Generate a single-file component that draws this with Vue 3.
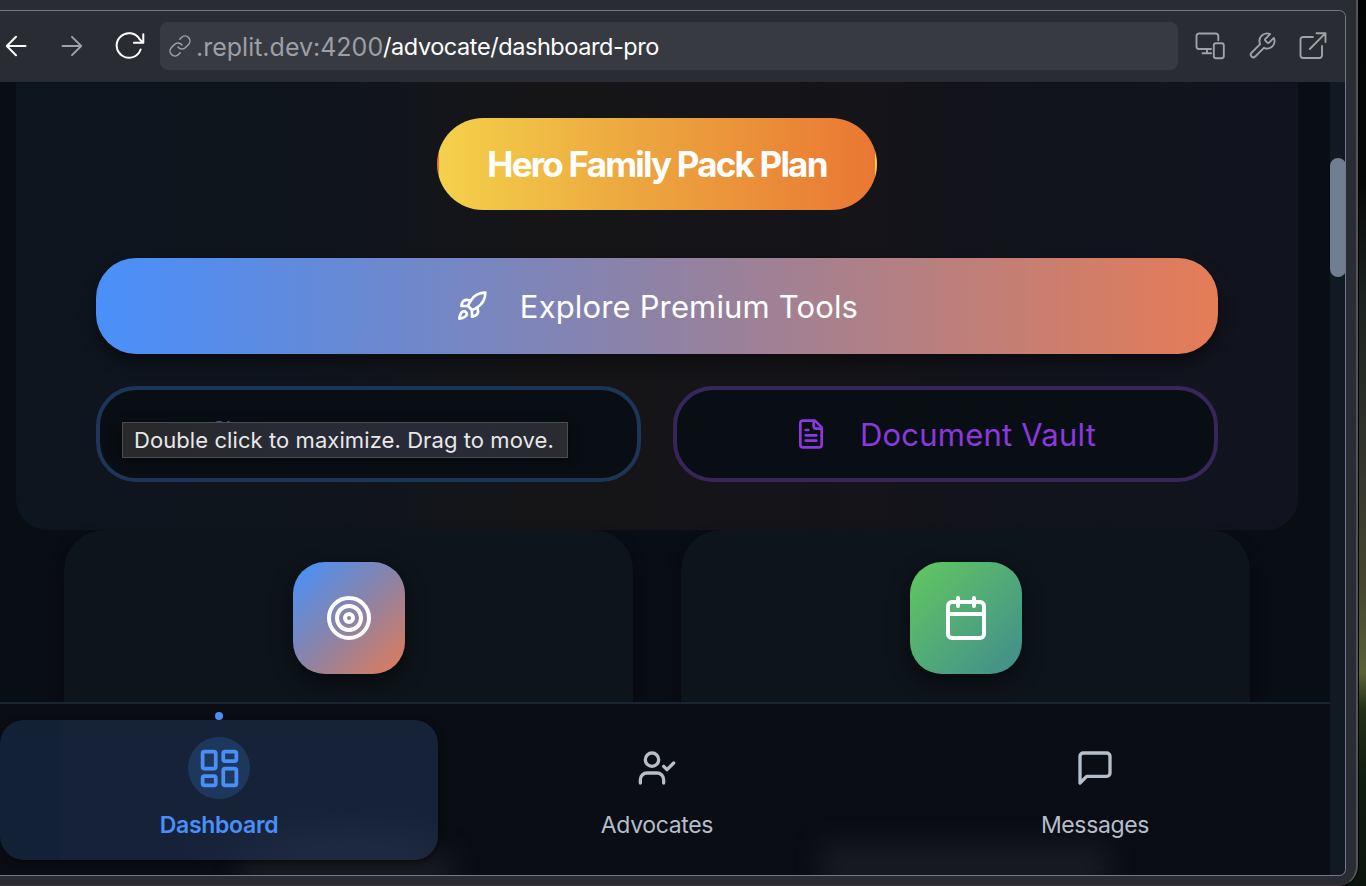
<script setup>
const tabs = [
  { id: 'dashboard', label: 'Dashboard', active: true },
  { id: 'advocates', label: 'Advocates', active: false },
  { id: 'messages', label: 'Messages', active: false }
]
</script>

<template>
  <div class="desktop">
    <div class="window">
      <div class="pane">
        <header class="toolbar">
          <div class="nav-buttons">
            <svg class="ic back" width="22" height="22" viewBox="0 0 22 22"><path d="M20.5 11H1.8M11 1.8 1.8 11l9.200 9.200" /></svg>
            <svg class="ic forward" width="22" height="22" viewBox="0 0 22 22"><path d="M1.5 11h18.7M11 1.8l9.2 9.2-9.2 9.2" /></svg>
            <svg class="ic reload" width="30" height="28" viewBox="0 0 30 28"><path d="M25.6 17.5A12.3 12.3 0 1 1 24.8 7.6L28 10.6M28.3 2.2v8.6h-9.4" /></svg>
          </div>
          <div class="address">
            <svg class="ic link" width="24" height="24" viewBox="0 0 24 24"><path d="M10 13a5 5 0 0 0 7.54.54l3-3a5 5 0 0 0-7.07-7.07l-1.72 1.71M14 11a5 5 0 0 0-7.54-.54l-3 3a5 5 0 0 0 7.07 7.07l1.71-1.71" /></svg>
            <span class="host">.replit.dev:4200</span><span class="path">/advocate/dashboard-pro</span>
          </div>
          <div class="tools">
            <svg class="ic" width="30" height="28" viewBox="0 0 30 28"><path d="M23.3 8.2V4A2.5 2.5 0 0 0 20.8 1.5H4A2.5 2.5 0 0 0 1.5 4v10.5A2.5 2.5 0 0 0 4 17H16M12 17v4M7.5 21.3H16" /><rect x="18.8" y="11.3" width="10" height="15" rx="2.2" /></svg>
            <svg class="ic wrench" width="30" height="30" viewBox="0 0 24 24"><path d="M14.7 6.3a1 1 0 0 0 0 1.4l1.6 1.6a1 1 0 0 0 1.4 0l3.77-3.77a6 6 0 0 1-7.94 7.94l-6.91 6.91a2.12 2.12 0 0 1-3-3l6.91-6.91a6 6 0 0 1 7.94-7.94l-3.76 3.76z" /></svg>
            <svg class="ic" width="28" height="28" viewBox="0 0 28 28"><path d="M14 5H4a2.5 2.5 0 0 0-2.5 2.5v16A2.5 2.5 0 0 0 4 26h16.5a2.5 2.5 0 0 0 2.5-2.5V14M17.5 1.2H26.5V10M26.5 1.2 10.8 17" /></svg>
          </div>
        </header>

        <div class="viewport">
          <main class="page">
            <section class="hero">
              <div class="plan">Hero Family Pack Plan</div>
              <button class="explore">
                <svg class="lu" width="32" height="32" viewBox="0 0 24 24"><path d="M4.5 16.5c-1.5 1.26-2 5-2 5s3.74-.5 5-2c.71-.84.7-2.13-.09-2.91a2.18 2.18 0 0 0-2.91-.09z" /><path d="m12 15-3-3a22 22 0 0 1 2-3.95A12.88 12.88 0 0 1 22 2c0 2.72-.78 7.5-6 11a22.35 22.35 0 0 1-4 2z" /><path d="M9 12H4s.55-3.03 2-4c1.62-1.08 5 0 5 0M12 15v5s3.03-.55 4-2c1.08-1.62 0-5 0-5" /></svg>
                <span>Explore Premium Tools</span>
              </button>
              <div class="pair">
                <button class="outline blue">
                  <svg class="lu" width="32" height="32" viewBox="0 0 24 24"><path d="M16 21v-2a4 4 0 0 0-4-4H6a4 4 0 0 0-4 4v2M22 21v-2a4 4 0 0 0-3-3.87M16 3.13a4 4 0 0 1 0 7.75" /><circle cx="9" cy="7" r="4" /></svg>
                </button>
                <button class="outline violet">
                  <svg class="lu" width="32" height="32" viewBox="0 0 24 24"><path d="M15 2H6a2 2 0 0 0-2 2v16a2 2 0 0 0 2 2h12a2 2 0 0 0 2-2V7z" /><path d="M14 2v4a2 2 0 0 0 2 2h4M10 9H8M16 13H8M16 17H8" /></svg>
                  <span>Document Vault</span>
                </button>
              </div>
            </section>

            <section class="cards">
              <article class="card">
                <div class="tile sunset">
                  <svg class="lu" width="48" height="48" viewBox="0 0 24 24"><circle cx="12" cy="12" r="10" /><circle cx="12" cy="12" r="6" /><circle cx="12" cy="12" r="2" /></svg>
                </div>
              </article>
              <article class="card">
                <div class="tile green">
                  <svg class="lu" width="48" height="48" viewBox="0 0 24 24"><rect x="3" y="4" width="18" height="18" rx="2" /><path d="M8 2v4M16 2v4M3 10h18" /></svg>
                </div>
              </article>
            </section>

            <nav class="tabbar">
              <i class="glow first"></i>
              <i class="glow second"></i>
              <div v-for="tab in tabs" :key="tab.id" class="tab" :class="{ active: tab.active }">
                <span v-if="tab.active" class="dot"></span>
                <span class="badge">
                  <svg v-if="tab.id === 'dashboard'" class="lu" width="45" height="45" viewBox="0 0 24 24"><rect x="3" y="3" width="7" height="9" rx="1" /><rect x="14" y="3" width="7" height="5" rx="1" /><rect x="14" y="12" width="7" height="9" rx="1" /><rect x="3" y="16" width="7" height="5" rx="1" /></svg>
                  <svg v-else-if="tab.id === 'advocates'" class="lu" width="40" height="40" viewBox="0 0 24 24"><path d="M16 21v-2a4 4 0 0 0-4-4H6a4 4 0 0 0-4 4v2" /><circle cx="9" cy="7" r="4" /><path d="m16 11 2 2 4-4" /></svg>
                  <svg v-else class="lu" width="40" height="40" viewBox="0 0 24 24"><path d="M21 15a2 2 0 0 1-2 2H7l-4 4V5a2 2 0 0 1 2-2h14a2 2 0 0 1 2 2z" /></svg>
                </span>
                <span class="label">{{ tab.label }}</span>
              </div>
            </nav>
          </main>
          <div class="scrollbar"><div class="thumb"></div></div>
        </div>
      </div>
    </div>
    <div class="tooltip">Double click to maximize. Drag to move.</div>
  </div>
</template>

<style>
body { margin: 0; overflow: hidden; }
</style>

<style scoped>
* { box-sizing: border-box; }
.desktop {
  position: relative;
  width: 1366px;
  height: 886px;
  overflow: hidden;
  background: linear-gradient(180deg, #020303 0%, #050706 20%, #1b211f 33%, #33352d 52%, #45452f 66%, #596036 76%, #223018 80%, #0f1c10 88%, #0b150d 100%);
  font-family: Inter, "Liberation Sans", sans-serif;
}
.window {
  width: 1358px;
  height: 886px;
  padding: 10px 10px 10px 0;
  background: #2a2c33;
  border-right: 2px solid #53545a;
  border-bottom: 1px solid #3f2f39;
  border-radius: 0 0 20px 0;
  box-shadow: 0 0 0 1px #000;
}
.pane {
  width: 1346px;
  height: 866px;
  border: solid #74778a;
  border-width: 1px 1px 1px 0;
  border-radius: 0 7px 7px 0;
  overflow: hidden;
}
.toolbar {
  display: flex;
  align-items: center;
  height: 71px;
  padding-bottom: 1px;
  background: #2a2c33;
}
.ic { fill: none; stroke: #a0a2a6; stroke-width: 1.9; stroke-linecap: round; stroke-linejoin: round; flex: none; }
.nav-buttons { display: flex; align-items: center; width: 160px; padding-left: 5px; }
.back { stroke: #fff; stroke-width: 2; }
.forward { margin-left: 34px; }
.reload { margin-left: 32px; stroke: #fff; stroke-width: 2; }
.address {
  display: flex;
  align-items: center;
  width: 1018px;
  height: 48px;
  padding-left: 8px;
  border-radius: 8px;
  background: #383a41;
  white-space: nowrap;
}
.link { stroke-width: 1.5; margin-right: 4px; }
.host { width: 187px; padding-top: 1px; font-size: 25px; color: #9d9fa4; }
.path { font-size: 23.5px; letter-spacing: -.43px; color: #fff; }
.tools { display: flex; align-items: center; gap: 22px; padding-left: 17px; }
.wrench { stroke-width: 1.5; }

.viewport { display: flex; height: 793px; }
.page {
  position: relative;
  display: flex;
  flex-direction: column;
  width: 1330px;
  height: 793px;
  background: #090d14;
  overflow: hidden;
}
.hero {
  display: flex;
  flex-direction: column;
  align-items: center;
  height: 448px;
  margin: 0 32px 0 16px;
  padding: 36px 80px 0;
  border-radius: 0 0 32px 32px;
  background: linear-gradient(90deg, #0d151f 0%, #10151c 25%, #151518 40%, #151418 60%, #12141c 80%, #11131f 100%);
}
.plan {
  display: flex;
  align-items: center;
  justify-content: center;
  width: 440px;
  height: 92px;
  border: 2px solid transparent;
  border-radius: 46px;
  background-image: linear-gradient(90deg, #f4d14a, #edab40 40%, #e97733);
  color: #fff;
  font-size: 35px;
  font-weight: 700;
  letter-spacing: -1.8px;
}
button { font-family: inherit; margin: 0; padding: 0; border: 0; }
.lu { display: block; flex: none; fill: none; stroke: currentColor; stroke-width: 2; stroke-linecap: round; stroke-linejoin: round; }
.explore {
  display: flex;
  align-items: center;
  justify-content: center;
  gap: 32px;
  width: 1122px;
  height: 96px;
  margin-top: 48px;
  border-radius: 40px;
  background: linear-gradient(90deg, #4a90fa, #538dee 8%, #8e82a5 50%, #e57c57 100%);
  box-shadow: 0 8px 16px rgba(0, 0, 0, .45);
  color: #fff;
  font-size: 31px;
  font-weight: 400;
  letter-spacing: .15px;
}
.pair { display: grid; grid-template-columns: 1fr 1fr; gap: 32px; width: 1122px; margin-top: 32px; }
.outline {
  display: flex;
  align-items: center;
  justify-content: center;
  gap: 33px;
  height: 96px;
  border-radius: 40px;
  background: #090e14;
  font-size: 31px;
  font-weight: 400;
  letter-spacing: .22px;
}
.blue { justify-content: flex-start; padding-left: 107px; border: 4px solid #1d3559; color: #3265aa; }
.violet { border: 4px solid #38265a; color: #8b38df; }

.cards { display: flex; gap: 48px; flex: 1; padding: 0 80px 0 64px; }
.card {
  display: flex;
  justify-content: center;
  flex: 1;
  padding-top: 32px;
  border-radius: 40px 40px 0 0;
  background: #0d141a;
  box-shadow: 0 8px 14px rgba(6, 8, 9, .6);
}
.tile {
  display: flex;
  align-items: center;
  justify-content: center;
  width: 112px;
  height: 112px;
  border-radius: 32px;
  color: #fff;
  box-shadow: 0 8px 20px rgba(0, 0, 0, .5);
}
.sunset { background: linear-gradient(135deg, #4b90f6 5%, #8b83a7 50%, #e47b56 100%); }
.green { background: linear-gradient(135deg, #60c560 5%, #51aa78 50%, #408c8d 100%); }

.tabbar {
  position: absolute;
  left: 0;
  right: 0;
  bottom: 0;
  display: flex;
  height: 173px;
  padding: 16px 16px 15px 0;
  border-top: 2px solid #192530;
  overflow: hidden;
  background: #0a0d14;
}
.glow { position: absolute; height: 50px; background: #171a20; filter: blur(12px); }
.first { left: 240px; bottom: -28px; width: 212px; }
.second { left: 822px; bottom: -18px; width: 286px; }
.tab {
  position: relative;
  display: flex;
  flex-direction: column;
  align-items: center;
  flex: 1;
  height: 140px;
  padding-top: 17px;
  border-radius: 24px;
  color: #b6bec9;
}
.tab.active {
  color: #4a8ff8;
  background:
    radial-gradient(ellipse 170px 50px at 350px 100%, #1d2940 30%, transparent 100%),
    linear-gradient(90deg, #122136 60px, #162238 60px);
  box-shadow: 0 2px 6px rgba(0, 0, 0, .5);
}
.dot { position: absolute; top: -8px; left: 215px; width: 8px; height: 8px; border-radius: 50%; background: #4a8ff8; }
.badge { display: flex; align-items: center; justify-content: center; width: 62px; height: 62px; border-radius: 50%; }
.active .badge { background: #1e385d; }
.label { margin-top: 12px; font-size: 23px; line-height: 28px; font-weight: 400; letter-spacing: -.35px; }
.active .label { font-weight: 600; letter-spacing: -.3px; }

.scrollbar { width: 15px; padding-top: 76px; background: #111922; }
.thumb { width: 16px; height: 119px; border-radius: 8px; background: #6f7f91; }

.tooltip {
  position: absolute;
  left: 122px;
  top: 422px;
  width: 446px;
  height: 36px;
  padding-left: 11px;
  border: 1px solid #4b4c50;
  background: linear-gradient(90deg, #29292a, #282b36 40%, #282b37 75%, #2a2b30);
  box-shadow: 0 2px 8px rgba(0, 0, 0, .5);
  color: #e8e8e9;
  font-size: 22px;
  font-weight: 400;
  letter-spacing: .08px;
  line-height: 35px;
  white-space: nowrap;
}
</style>
